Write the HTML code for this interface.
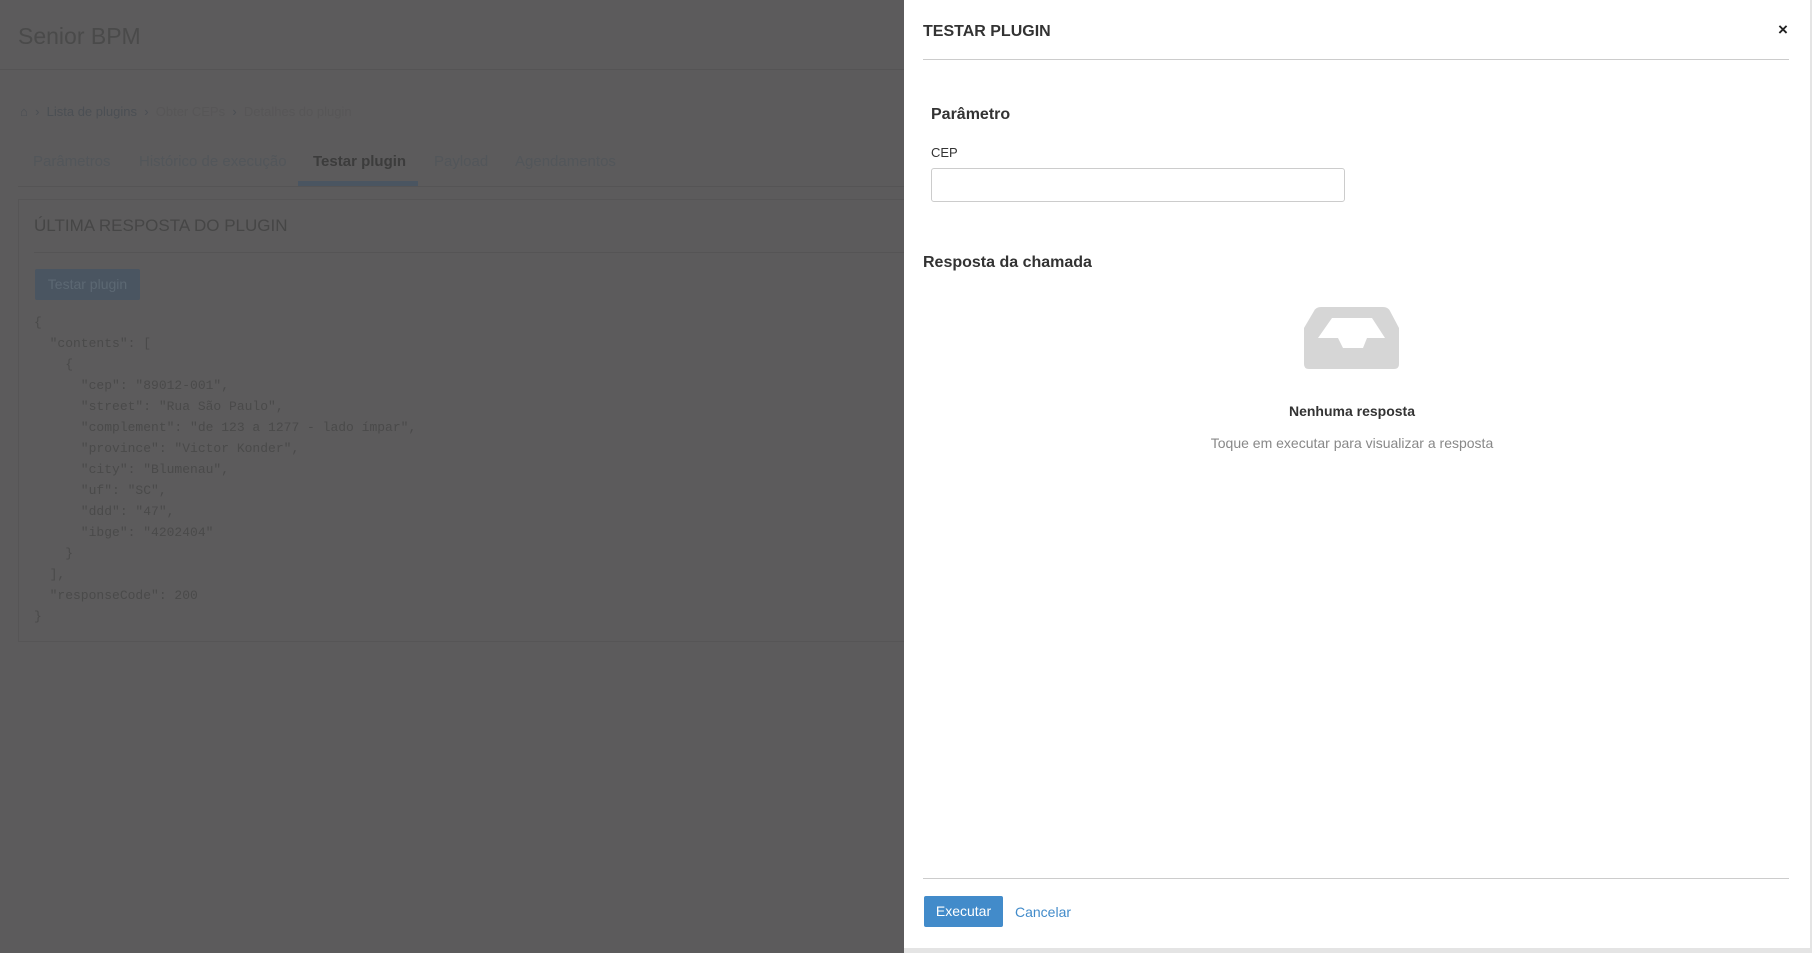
<!DOCTYPE html>
<html><head><meta charset="utf-8"><style>
*{margin:0;padding:0;box-sizing:border-box}
body{width:1812px;height:953px;overflow:hidden;background:#e4e4e4;font-family:"Liberation Sans",sans-serif;position:relative}
.bg{position:absolute;left:0;top:0;width:904px;height:953px;background:#5c5b5c;color:#4a4a4a}
.a{position:absolute;white-space:nowrap}
.panel{position:absolute;left:904px;top:0;width:906px;height:948px;background:#fff;color:#333}
pre{font-family:"Liberation Mono",monospace;font-size:13px;line-height:21px;color:#4a4a4a;white-space:pre !important}
</style></head><body>
<div class="bg">
  <div class="a" style="left:18px;top:23px;font-size:23px;color:#4a4a4a">Senior BPM</div>
  <div class="a" style="left:0;top:69px;width:904px;height:1px;background:#555455"></div>
  <div class="a" style="left:20px;top:104px;font-size:13px;color:#4b4f54">&#8962;&nbsp;&nbsp;›&nbsp;&nbsp;Lista de plugins&nbsp;&nbsp;›&nbsp;&nbsp;<span style="color:#575657">Obter CEPs</span>&nbsp;&nbsp;›&nbsp;&nbsp;<span style="color:#575657">Detalhes do plugin</span></div>
  <div class="a" style="left:33px;top:153px;font-size:15px;color:#52565a">Parâmetros</div>
  <div class="a" style="left:139px;top:153px;font-size:15px;color:#52565a">Histórico de execução</div>
  <div class="a" style="left:313px;top:153px;font-size:15px;color:#3c3c3c;font-weight:bold">Testar plugin</div>
  <div class="a" style="left:434px;top:153px;font-size:15px;color:#52565a">Payload</div>
  <div class="a" style="left:515px;top:153px;font-size:15px;color:#52565a">Agendamentos</div>
  <div class="a" style="left:18px;top:186px;width:886px;height:1px;background:#555455"></div>
  <div class="a" style="left:298px;top:181px;width:120px;height:5px;background:#4a5561"></div>
  <div class="a" style="left:18px;top:199px;width:900px;height:443px;border:1px solid #565556"></div>
  <div class="a" style="left:34px;top:216px;font-size:17px;color:#464646">ÚLTIMA RESPOSTA DO PLUGIN</div>
  <div class="a" style="left:34px;top:252px;width:870px;height:1px;background:#555455"></div>
  <div class="a" style="left:35px;top:269px;width:105px;height:31px;background:#4a5561;border-radius:2px;color:#5c6873;font-size:14px;line-height:31px;text-align:center">Testar plugin</div>
<pre class="a" style="left:34px;top:312px">{
  "contents": [
    {
      "cep": "89012-001",
      "street": "Rua São Paulo",
      "complement": "de 123 a 1277 - lado ímpar",
      "province": "Victor Konder",
      "city": "Blumenau",
      "uf": "SC",
      "ddd": "47",
      "ibge": "4202404"
    }
  ],
  "responseCode": 200
}</pre>
</div>
<div class="panel">
  <div class="a" style="left:19px;top:23px;font-size:16px;font-weight:bold;color:#333">TESTAR PLUGIN</div>
  <div class="a" style="left:874px;top:20px;font-size:17px;font-weight:bold;color:#222">×</div>
  <div class="a" style="left:19px;top:59px;width:866px;height:1px;background:#ccc"></div>
  <div class="a" style="left:27px;top:106px;font-size:16px;font-weight:bold;color:#333">Parâmetro</div>
  <div class="a" style="left:27px;top:145px;font-size:13px;color:#333">CEP</div>
  <div class="a" style="left:27px;top:168px;width:414px;height:34px;border:1px solid #ccc;border-radius:3px"></div>
  <div class="a" style="left:19px;top:254px;font-size:16px;font-weight:bold;color:#333">Resposta da chamada</div>
  <svg class="a" style="left:400px;top:307px" width="96" height="63" viewBox="1304 307 96 63"><path fill="#d6d6d6" fill-rule="evenodd" d="M1304 328 L1314 311 Q1316 307 1321 307 L1383 307 Q1388 307 1390 311 L1399 328 L1399 364 Q1399 369 1394 369 L1309 369 Q1304 369 1304 364 Z M1318 338 L1332 318 L1372 318 L1385 338 L1367 338 L1363 348 L1343 348 L1338 338 Z"/></svg>
  <div class="a" style="left:0;width:896px;text-align:center;top:403px;font-size:14px;font-weight:bold;color:#333">Nenhuma resposta</div>
  <div class="a" style="left:0;width:896px;text-align:center;top:435px;font-size:14px;color:#888">Toque em executar para visualizar a resposta</div>
  <div class="a" style="left:19px;top:878px;width:866px;height:1px;background:#ccc"></div>
  <div class="a" style="left:20px;top:896px;width:79px;height:31px;background:#428bca;border-radius:2px;color:#fff;font-size:14px;line-height:31px;text-align:center">Executar</div>
  <div class="a" style="left:111px;top:904px;font-size:14px;color:#428bca">Cancelar</div>
</div>
</body></html>
